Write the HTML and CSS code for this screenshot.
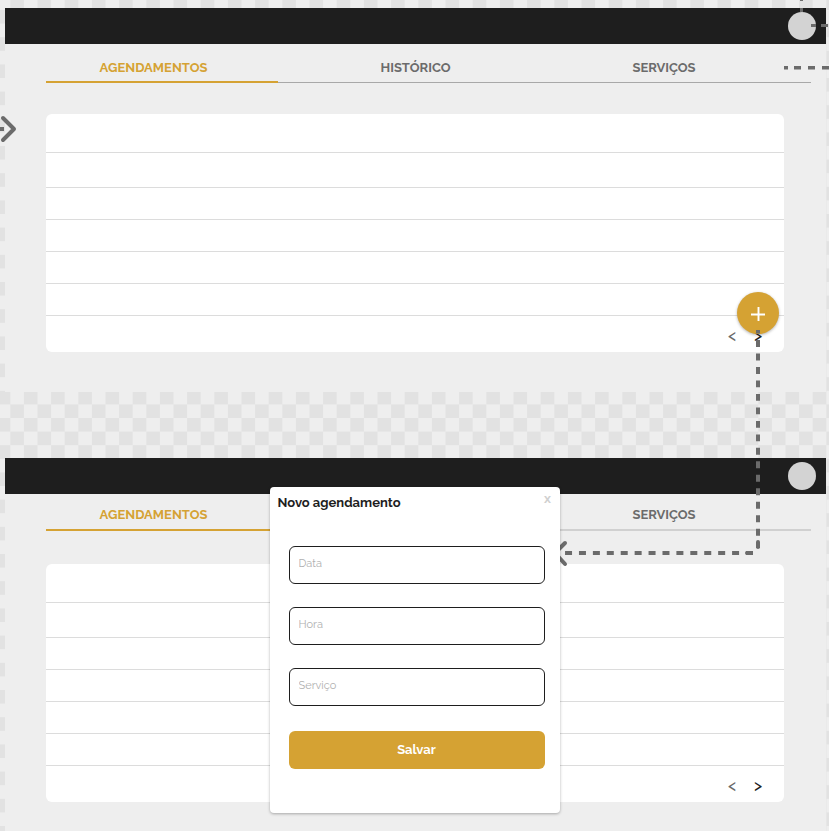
FILE: index.html
```html
<!DOCTYPE html>
<html lang="pt-BR">
<head>
<meta charset="utf-8">
<meta name="viewport" content="width=device-width, initial-scale=1">
<title>Agendamentos</title>
<link rel="stylesheet" href="styles.css">
</head>
<body>
<svg class="backdrop" aria-hidden="true">
  <defs>
    <pattern id="checker" width="2" height="2" patternUnits="userSpaceOnUse" patternTransform="translate(-3.3 -3.6) scale(13.6)">
      <path d="M1 0h1v1h-1zM0 1h1v1h-1z" fill="#e2e2e2"/>
    </pattern>
  </defs>
  <rect width="100%" height="100%" fill="url(#checker)"/>
</svg>

<main class="board">
  <section class="screen">
    <header class="topbar"><button class="avatar" type="button" aria-label="Perfil"></button></header>
    <nav class="tabs">
      <a class="tab tab-active" href="#agendamentos">AGENDAMENTOS</a>
      <a class="tab" href="#historico">HISTÓRICO</a>
      <a class="tab tab-last" href="#servicos">SERVIÇOS</a>
    </nav>
    <div class="card">
      <ul class="rows"><li></li><li></li><li></li><li></li><li></li><li></li></ul>
      <div class="pager">
        <button class="page-button" type="button" aria-label="Anterior">&lt;</button>
        <button class="page-button page-next" type="button" aria-label="Próxima">&gt;</button>
      </div>
      <button class="fab" type="button" aria-label="Novo agendamento">
        <svg width="14" height="14" viewBox="0 0 14 14" aria-hidden="true"><path d="M7.500 0v14M0 7.500h14" stroke="#fff" stroke-width="1.900"/></svg>
      </button>
    </div>
  </section>

  <section class="screen screen-dialog">
    <header class="topbar"><button class="avatar" type="button" aria-label="Perfil"></button></header>
    <nav class="tabs">
      <a class="tab tab-active" href="#agendamentos">AGENDAMENTOS</a>
      <a class="tab" href="#historico">HISTÓRICO</a>
      <a class="tab tab-last" href="#servicos">SERVIÇOS</a>
    </nav>
    <div class="card">
      <ul class="rows"><li></li><li></li><li></li><li></li><li></li><li></li></ul>
      <div class="pager">
        <button class="page-button" type="button" aria-label="Anterior">&lt;</button>
        <button class="page-button page-next" type="button" aria-label="Próxima">&gt;</button>
      </div>
    </div>
    <form class="dialog" aria-labelledby="dialog-title">
      <div class="dialog-head">
        <h2 class="dialog-title" id="dialog-title">Novo agendamento</h2>
        <button class="close" type="button" aria-label="Fechar">x</button>
      </div>
      <div class="fields">
        <input class="field" type="text" aria-label="Data" placeholder="Data">
        <input class="field" type="text" aria-label="Hora" placeholder="Hora">
        <input class="field" type="text" aria-label="Serviço" placeholder="Serviço">
        <button class="save" type="submit">Salvar</button>
      </div>
    </form>
  </section>

  <svg class="flow flow-left" width="20" height="600" viewBox="0 0 20 600" aria-hidden="true">
    <path d="M0 129h4"/>
    <path d="M3 118l11 11-11 11" stroke-linecap="round" stroke-linejoin="round"/>
  </svg>
  <svg class="flow flow-right" width="289" height="600" viewBox="540 0 289 600" aria-hidden="true">
    <path d="M801.500 0v1M801.500 8v4M811 25.500h5M821 25.500h7" stroke-width="3"/>
    <path d="M784 67.700h4M794 67.700h7M808 67.700h7M822 67.700h7" stroke-width="3.500"/>
    <path d="M758 330v218" stroke-dasharray="6.900 6.580" stroke-dashoffset="3.450"/>
    <path d="M753 553H565" stroke-dasharray="7 6.920"/>
    <path d="M758 542v5M751 553h-4" stroke-linecap="round"/>
    <path d="M565 543l-10 10 10 11" stroke-linecap="round" stroke-linejoin="round"/>
  </svg>
</main>
</body>
</html>
```
FILE: styles.css
```css
* { box-sizing: border-box; }

body {
  margin: 0;
  background: #eee;
  color: #1e1e1e;
  font-family: Raleway, Lato, sans-serif;
  font-size: 13px;
  line-height: 16px;
}

button, input { font: inherit; }

button {
  padding: 0;
  border: 0;
  background: none;
  cursor: pointer;
}

.backdrop {
  position: absolute;
  inset: 0;
  width: 100%;
  height: 100%;
  shape-rendering: crispEdges;
}

.board {
  position: relative;
  display: flex;
  flex-direction: column;
  gap: 66px;
  min-height: 100vh;
  padding: 8px 3px 0 5px;
}

.screen {
  position: relative;
  padding-bottom: 40px;
  background: #eee;
}

.screen-dialog {
  flex: 1;
  padding-bottom: 29px;
}

.topbar {
  display: flex;
  align-items: center;
  justify-content: flex-end;
  height: 36px;
  padding-right: 10px;
  background: #1e1e1e;
}

.avatar {
  width: 28px;
  height: 28px;
  border-radius: 50%;
  background: #d3d3d3;
}

.tabs {
  position: relative;
  display: grid;
  grid-template-columns: 215fr 309fr 241fr;
  margin: 0 15px 31px 41px;
  padding: 16px 0 6px;
  border-bottom: 1px solid #a8a8a8;
}

.tabs::after {
  content: "";
  position: absolute;
  left: 0;
  bottom: -1px;
  width: 232px;
  height: 2px;
  background: #d5a233;
}

.screen-dialog .tabs {
  margin-bottom: 33px;
  padding: 13px 0 6px;
  border-bottom: 2px solid #d0d0d0;
}

.screen-dialog .tabs::after { bottom: -2px; }

.tab {
  color: #6b6b6b;
  font-weight: 700;
  text-align: center;
  text-decoration: none;
}

.tab-active { color: #d5a233; }

.tab-last { padding-right: 53px; }

.card {
  position: relative;
  margin: 0 42px 0 41px;
  border-radius: 6px;
  background: #fff;
}

.rows {
  display: grid;
  grid-template-rows: 39px 35px 32px 32px 32px 32px;
  margin: 0;
  padding: 0;
  list-style: none;
}

.rows li { border-bottom: 1px solid #dcdcdc; }

.pager {
  display: flex;
  justify-content: flex-end;
  gap: 14px;
  height: 36px;
  padding: 12px 20px 8px;
}

.page-button {
  width: 12px;
  color: #6b6b6b;
  font-size: 16px;
  font-weight: 500;
  line-height: 16px;
}

.page-next { color: #1e1e1e; }

.fab {
  position: absolute;
  right: 5px;
  bottom: 18px;
  display: grid;
  place-items: center;
  width: 42px;
  height: 42px;
  padding-top: 2px;
  border-radius: 50%;
  background: #d5a233;
  box-shadow: 0 1px 3px rgba(0, 0, 0, 0.3);
}

.dialog {
  position: absolute;
  z-index: 2;
  top: 29px;
  left: 0;
  right: 2px;
  width: 290px;
  margin: 0 auto;
  padding: 8px 8px 44px;
  border-radius: 4px;
  background: #fff;
  box-shadow: 0 1px 3px rgba(0, 0, 0, 0.3);
}

.dialog-head {
  display: flex;
  align-items: flex-start;
  justify-content: space-between;
}

.dialog-title {
  margin: 0;
  font-size: 13px;
  font-weight: 700;
}

.close {
  width: 8px;
  color: #d0d0d0;
  font-weight: 700;
  line-height: 8px;
}

.fields {
  display: grid;
  gap: 23px;
  padding: 35px 7px 0 11px;
}

.field {
  width: 100%;
  height: 38px;
  padding: 0 9px 4px;
  border: 1px solid #1e1e1e;
  border-radius: 6px;
  background: #fff;
  color: #1e1e1e;
  font-size: 11px;
}

.field::placeholder {
  color: #b0b0b0;
  opacity: 1;
}

.save {
  height: 38px;
  margin-top: 2px;
  border-radius: 6px;
  background: #d5a233;
  color: #fff;
  font-weight: 700;
}

.flow {
  position: absolute;
  z-index: 1;
  top: 0;
  fill: none;
  stroke: #6b6b6b;
  stroke-width: 4;
  pointer-events: none;
}

.flow-left { left: 0; }

.flow-right { right: 0; }
```
